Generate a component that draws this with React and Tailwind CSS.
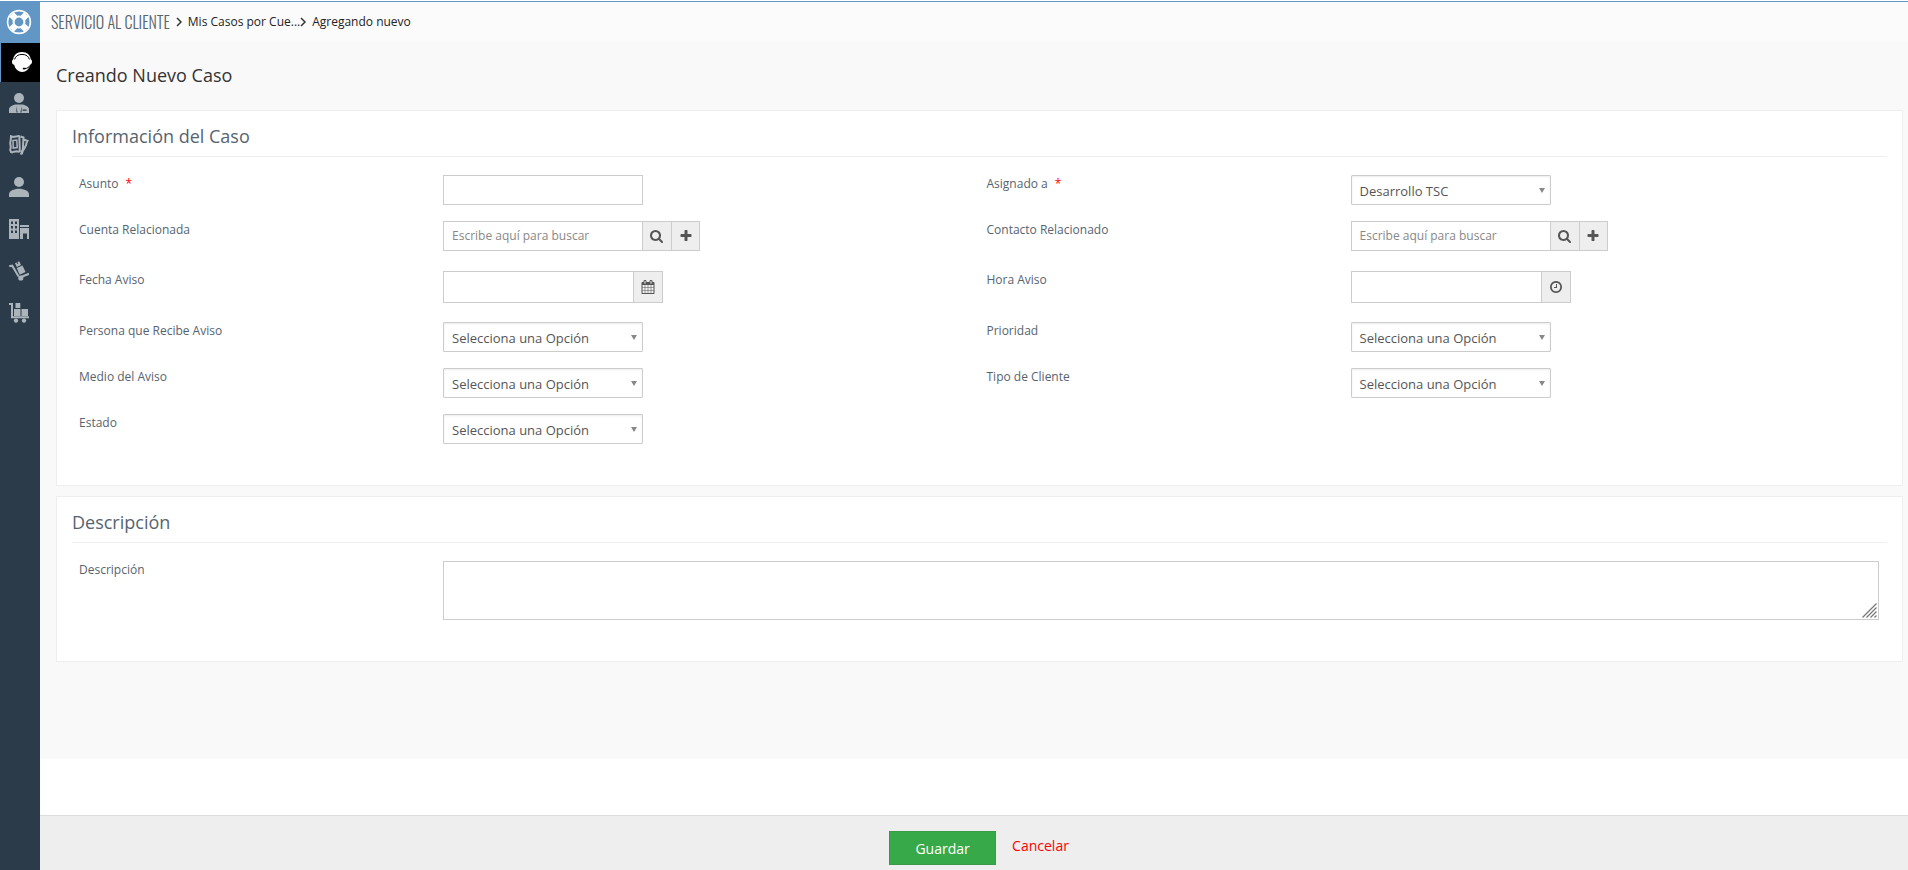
import React from 'react'

const FA_PATHS = {
  search: 'M1152 832q0-185-131.5-316.5t-316.5-131.5-316.5 131.5-131.5 316.5 131.5 316.5 316.5 131.5 316.5-131.5 131.5-316.5zm512 832q0 52-38 90t-90 38q-54 0-90-38l-343-342q-179 124-399 124-143 0-273.5-55.5t-225-150-150-225-55.5-273.5 55.5-273.5 150-225 225-150 273.5-55.5 273.5 55.5 225 150 150 225 55.5 273.5q0 220-124 399l343 343q37 37 37 90z',
  plus: 'M1600 736v192q0 40-28 68t-68 28h-416v416q0 40-28 68t-68 28h-192q-40 0-68-28t-28-68v-416h-416q-40 0-68-28t-28-68v-192q0-40 28-68t68-28h416v-416q0-40 28-68t68-28h192q40 0 68 28t28 68v416h416q40 0 68 28t28 68z',
  calendar: 'M192 1664h288v-288h-288v288zm352 0h320v-288h-320v288zm-352-352h288v-320h-288v320zm352 0h320v-320h-320v320zm-352-384h288v-288h-288v288zm736 736h320v-288h-320v288zm-384-736h320v-288h-320v288zm768 736h288v-288h-288v288zm-384-352h320v-320h-320v320zm-352-864v-288q0-13-9.5-22.5t-22.5-9.5h-64q-13 0-22.5 9.5t-9.5 22.5v288q0 13 9.5 22.5t22.5 9.5h64q13 0 22.5-9.5t9.5-22.5zm736 864h288v-320h-288v320zm-384-384h320v-288h-320v288zm384 0h288v-288h-288v288zm32-480v-288q0-13-9.5-22.5t-22.5-9.5h-64q-13 0-22.5 9.5t-9.5 22.5v288q0 13 9.5 22.5t22.5 9.5h64q13 0 22.5-9.5t9.5-22.5zm384-64v1280q0 52-38 90t-90 38h-1408q-52 0-90-38t-38-90v-1280q0-52 38-90t90-38h128v-96q0-66 47-113t113-47h64q66 0 113 47t47 113v96h384v-96q0-66 47-113t113-47h64q66 0 113 47t47 113v96h128q52 0 90 38t38 90z',
  clock: 'M1024 544v448q0 14-9 23t-23 9h-320q-14 0-23-9t-9-23v-64q0-14 9-23t23-9h224v-352q0-14 9-23t23-9h64q14 0 23 9t9 23zm416 352q0-148-73-273t-198-198-273-73-273 73-198 198-73 273 73 273 198 198 273 73 273-73 198-198 73-273zm224 0q0 209-103 385.5t-279.5 279.5-385.5 103-385.5-103-279.5-279.5-103-385.5 103-385.5 279.5-279.5 385.5-103 385.5 103 279.5 279.5 103 385.5z',
}

const FaIcon = ({ name }) => (
  <svg viewBox="0 0 1792 1792" className="w-[14px] h-[14px] fill-[#555]" aria-hidden="true">
    <path d={FA_PATHS[name]} />
  </svg>
)

const LifeRing = () => (
  <svg viewBox="0 0 26 26" className="w-[26px] h-[26px]" fill="none" aria-hidden="true">
    <circle cx="13" cy="13" r="11.4" stroke="#fff" strokeWidth="1.6" />
    <circle cx="13" cy="13" r="5.4" stroke="#fff" strokeWidth="2" />
    <g stroke="#fff" strokeWidth="6.4">
      <path d="M9 9 5.600 5.600M17 9l3.400-3.400M9 17l-3.400 3.400M17 17l3.400 3.400" />
    </g>
  </svg>
)

const Headset = () => (
  <svg viewBox="0 0 20 20" className="w-5 h-5" aria-hidden="true">
    <path fill="#fff" d="M10 0c5 0 8.400 3.200 8.700 7.200 1 .4 1.300 1.200 1.300 2.600 0 1.500-.6 2.500-1.700 2.700C17.500 17 13.800 20 10.300 20 6.500 20 3 17 2.200 12.800.8 12.600 0 11.500 0 9.900c0-1.400.4-2.300 1.300-2.700C1.600 3.200 5 0 10 0z" />
    <path fill="none" stroke="#000" strokeWidth="1" d="M2.600 7.400C3.400 4.300 6 2.400 10 2.400s6.700 1.900 7.400 5" />
    <path fill="none" stroke="#000" strokeWidth="1" d="M18 13.400c-1 2-2.800 3-5.200 3.200" />
    <path fill="#000" d="M10.800 15.800h2.600v1.600h-2.600z" />
  </svg>
)

const Agent = () => (
  <svg viewBox="0 0 20 20" className="w-5 h-5" fill="#abb4bb" aria-hidden="true">
    <circle cx="10" cy="5" r="5" />
    <path d="M0 20v-3.500c0-2.500 3-4 6.600-4.900h6.800c3.600.9 6.600 2.400 6.600 4.900V20z" />
    <path fill="#2c3b49" d="M13.600 16.400h4v1.300h-4zM7.200 13l1.400 6.500H7.500zM12.800 13l-1.400 6.500h1.100z" />
  </svg>
)

const Tickets = () => (
  <svg viewBox="0 0 20 20" className="w-5 h-5" fill="none" stroke="#abb4bb" strokeWidth="2" aria-hidden="true">
    <path d="m2 1.200 2 .8 3-.4 2.300-.6 1 .3.500 15-1.500.5-1.800-.6-2.600.5-1.800.8L2 17l-.8-2 .6-3-.6-4 .6-3z" />
    <path strokeWidth="1.500" d="M4 5.500 7.800 5l.4 7.600-4 .5z" />
    <path d="m11.500 1.500 3 1-.7 12-1.500 3.500M14.500 4.500l4 1.300-1 2-.3 2-2 4-1.400 2-.8 2.700-1.700.5" />
  </svg>
)

const User = () => (
  <svg viewBox="0 0 20 20" className="w-5 h-5" fill="#abb4bb" aria-hidden="true">
    <circle cx="10" cy="5" r="5" />
    <path d="M0 20v-2.500c0-3.500 4.800-5.700 10-5.700s10 2.200 10 5.700V20z" />
  </svg>
)

const Building = () => (
  <svg viewBox="0 0 20 20" className="w-5 h-5" aria-hidden="true">
    <path fill="#abb4bb" d="M0 0h10v20H0zM11 8V6h9v2zM11 9h9v11h-2v-5.500h-4V20h-3z" />
    <path fill="#2c3b49" d="M2 2.500h2V5H2zm4 0h2V5H6zM2 7h2v2.500H2zm4 0h2v2.500H6zM2 11.500h2V14H2zm4 0h2V14H6z" />
  </svg>
)

const HandTruck = () => (
  <svg viewBox="0 0 20 20" className="w-5 h-5" aria-hidden="true">
    <path fill="none" stroke="#abb4bb" strokeWidth="2" d="m.2 5.200 3-.5 6.400 10.800M12 16l8-3.200" />
    <circle cx="11.800" cy="17" r="2.600" fill="#abb4bb" />
    <path fill="#abb4bb" d="m6 2.200 4.200-2 1.800 3.700-4.200 2zM7.700 7l5.800-2.600 3 6.700-5.800 2.700z" />
    <path fill="#2c3b49" d="m7.500 1.500 1-.5.7 1.500-1 .5z" />
  </svg>
)

const Cart = () => (
  <svg viewBox="0 0 20 20" className="w-5 h-5" fill="#abb4bb" aria-hidden="true">
    <path fill="none" stroke="#abb4bb" strokeWidth="2" d="M0 1h3v13.200h17" />
    <path d="M6.500 0h4.800v5H6.500zM5 6h6.500v7H5zM12.500 6H19v7h-6.500z" />
    <circle cx="7" cy="17.600" r="2.200" />
    <circle cx="15" cy="17.600" r="2.200" />
  </svg>
)

const NAV = [
  { label: 'Agentes', icon: Agent },
  { label: 'Tickets', icon: Tickets },
  { label: 'Contactos', icon: User },
  { label: 'Cuentas', icon: Building },
  { label: 'Productos', icon: HandTruck },
  { label: 'Pedidos', icon: Cart },
]

const Sidebar = () => (
  <nav className="w-10 shrink-0 bg-[#2c3b49] flex flex-col">
    <a href="#inicio" aria-label="Inicio" className="h-[42px] pr-[2px] bg-[#6297c5] flex items-center justify-center">
      <LifeRing />
    </a>
    <a href="#casos" aria-label="Casos" className="h-[39px] pl-[3px] pb-[2px] bg-black border-l border-[#6297c5] flex items-center justify-center">
      <Headset />
    </a>
    {NAV.map(({ label, icon: Icon }) => (
      <a key={label} href={'#' + label.toLowerCase()} aria-label={label} className="h-[42px] pr-[2px] flex items-center justify-center">
        <Icon />
      </a>
    ))}
  </nav>
)

const Chevron = () => (
  <svg viewBox="0 0 6 10" className="w-[6px] h-[10px]" fill="none" stroke="#333" strokeWidth="1.500" aria-hidden="true">
    <path d="m1 1 4 4-4 4" />
  </svg>
)

const Field = ({ id, label, required, children }) => (
  <>
    <label htmlFor={id} className="px-[7px] pt-[7px] text-xs leading-5 text-[#56646f]">
      {label}
      {required && <span className="ml-[7px] text-[#f00]">*</span>}
    </label>
    <div className="p-2 flex items-start">{children}</div>
  </>
)

const SelectBox = ({ id, options }) => (
  <div className="relative w-[200px]">
    <select id={id} className="block w-full h-[30px] appearance-none bg-white border border-[#ccc] rounded-[1px] pl-2 pr-6 pt-[3px] text-[13px] text-[#555] shadow-[inset_0_1px_2px_#00000014] outline-none">
      {options.map(o => <option key={o}>{o}</option>)}
    </select>
    <svg viewBox="0 0 6 6" className="absolute right-[6px] top-[13px] w-[6px] h-[6px] fill-[#888] pointer-events-none" aria-hidden="true">
      <path d="M0 0h6L3 5z" />
    </svg>
  </div>
)

const LookupBox = ({ id }) => (
  <div className="flex">
    <input id={id} type="text" placeholder="Escribe aquí para buscar" className="w-[200px] h-[30px] bg-white border border-[#ccc] px-2 pb-[2px] text-xs placeholder:text-[#888] outline-none" />
    <button type="button" aria-label="Buscar" className="w-[29px] h-[30px] bg-[#eee] border-y border-r border-[#ccc] flex items-center justify-center">
      <FaIcon name="search" />
    </button>
    <button type="button" aria-label="Agregar" className="w-7 h-[30px] bg-[#eee] border-y border-r border-[#ccc] flex items-center justify-center">
      <FaIcon name="plus" />
    </button>
  </div>
)

const PickerBox = ({ id, icon, title }) => (
  <div className="flex w-[220px] h-8 border border-[#ccc] bg-white">
    <input id={id} type="text" className="min-w-0 flex-1 px-2 text-xs outline-none" />
    <button type="button" aria-label={title} className="w-[29px] bg-[#eee] border-l border-[#ccc] flex items-center justify-center">
      <FaIcon name={icon} />
    </button>
  </div>
)

const Panel = ({ title, children }) => (
  <section className="bg-white border border-[#eee] px-[15px] pb-[33px]">
    <h2 className="pt-[13px] pb-[8px] mb-[10px] border-b border-[#eee] text-lg leading-6 text-[#56646f]">{title}</h2>
    {children}
  </section>
)

const ROW = 'grid grid-cols-[20%_30%_20%_30%]'
const EMPTY = ['Selecciona una Opción']

const App = () => {
  return (
    <div className="min-h-screen pt-px flex bg-white font-['Open_Sans',sans-serif]">
      <Sidebar />
      <form className="flex-1 min-w-0 flex flex-col" onSubmit={e => e.preventDefault()}>
        <header className="h-[41px] bg-[#fbfbfb] border-t border-[#6297c5] pl-[11px] flex items-center text-xs text-[#222]">
          <a href="#servicio" className="mr-[6px] font-['Oswald','Liberation_Sans_Narrow','Roboto_Condensed',sans-serif] font-light text-base text-[#56646f]">SERVICIO AL CLIENTE</a>
          <Chevron />
          <a href="#mis-casos" className="ml-[6px]">Mis Casos por Cue...</a>
          <Chevron />
          <span className="ml-[6px]">Agregando nuevo</span>
        </header>

        <main className="flex-1 bg-[#f9f9f9] pl-4 pr-[5px]">
          <h1 className="pt-[21px] pb-[23px] text-lg leading-6 text-[#333]">Creando Nuevo Caso</h1>

          <div className="flex flex-col gap-[10px]">
            <Panel title="Información del Caso">
              <div className={ROW}>
                <Field id="asunto" label="Asunto" required>
                  <input id="asunto" type="text" className="w-[200px] h-[30px] bg-white border border-[#ccc] px-2 text-xs outline-none" />
                </Field>
                <Field id="asignado" label="Asignado a" required>
                  <SelectBox id="asignado" options={['Desarrollo TSC']} />
                </Field>
              </div>
              <div className={ROW + ' pb-1'}>
                <Field id="cuenta" label="Cuenta Relacionada"><LookupBox id="cuenta" /></Field>
                <Field id="contacto" label="Contacto Relacionado"><LookupBox id="contacto" /></Field>
              </div>
              <div className={ROW + ' pb-[3px]'}>
                <Field id="fecha" label="Fecha Aviso"><PickerBox id="fecha" icon="calendar" title="Elegir fecha" /></Field>
                <Field id="hora" label="Hora Aviso"><PickerBox id="hora" icon="clock" title="Elegir hora" /></Field>
              </div>
              <div className={ROW}>
                <Field id="persona" label="Persona que Recibe Aviso"><SelectBox id="persona" options={EMPTY} /></Field>
                <Field id="prioridad" label="Prioridad"><SelectBox id="prioridad" options={EMPTY} /></Field>
                <Field id="medio" label="Medio del Aviso"><SelectBox id="medio" options={EMPTY} /></Field>
                <Field id="tipo" label="Tipo de Cliente"><SelectBox id="tipo" options={EMPTY} /></Field>
                <Field id="estado" label="Estado"><SelectBox id="estado" options={EMPTY} /></Field>
              </div>
            </Panel>

            <Panel title="Descripción">
              <div className="grid grid-cols-[20%_80%]">
                <Field id="descripcion" label="Descripción">
                  <div className="relative flex-1">
                    <textarea id="descripcion" className="block w-full h-[59px] resize-none bg-white border border-[#ccc] px-2 py-1 text-xs outline-none" />
                    <svg viewBox="0 0 15 15" className="absolute right-[2px] bottom-[2px] w-[15px] h-[15px] pointer-events-none" fill="none" stroke="#777" strokeWidth="1.300" aria-hidden="true">
                      <path d="M.5 14.500l14-14M4.500 14.500l10-10M8.500 14.500l6-6M12.500 14.500l2-2" />
                    </svg>
                  </div>
                </Field>
              </div>
            </Panel>
          </div>
        </main>

        <div className="h-14 shrink-0" />
        <footer className="h-[55px] shrink-0 bg-[#eee] border-t border-[#ddd] pt-[15px] pl-[10px] flex items-start justify-center gap-4 text-sm">
          <button type="submit" className="w-[107px] h-[34px] pt-[2px] bg-[#37a948] border border-[#3a9a48] text-white">Guardar</button>
          <a href="#cancelar" className="pt-[5px] leading-5 text-[#f00]">Cancelar</a>
        </footer>
      </form>
    </div>
  )
}

export default App
